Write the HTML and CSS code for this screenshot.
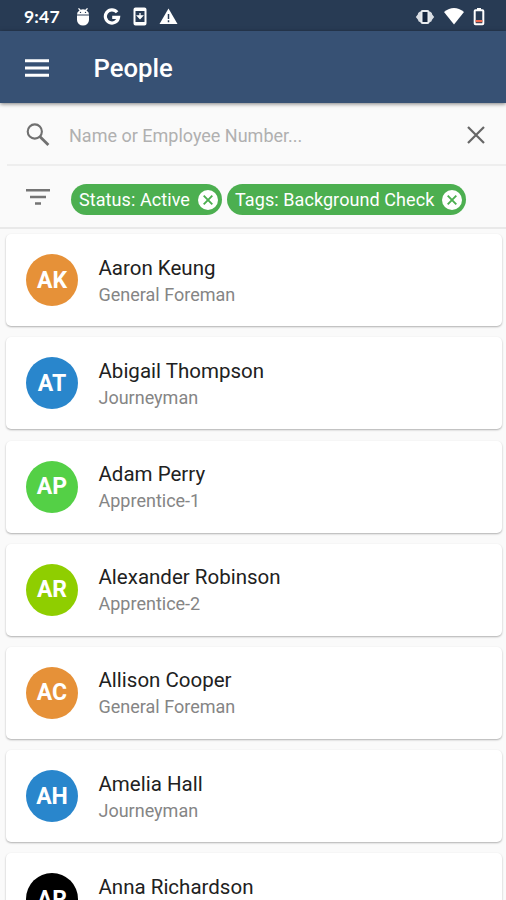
FILE: index.html
```
<!DOCTYPE html>
<html lang="en">
<head>
<meta charset="utf-8">
<title>People</title>
<link rel="stylesheet" href="styles.css">
</head>
<body>
<div class="screen">
  <div class="status-bar">
    <span class="clock">9:47</span>
    <div class="notifications">
      <svg width="16" height="20" viewBox="0 0 16 20"><path fill="#fff" d="M2 8.600h12v4.400a6 5.500 0 0 1-12 0zM2 7.600a6 5 0 0 1 2.500-4.200L3 1.800l1-.8 1.700 1.800a6.500 6.500 0 0 1 4.600 0L12 1l1 .8-1.500 1.600a6 5 0 0 1 2.500 4.200z"/><circle cx="5.500" cy="5.400" r=".7" fill="#283b54"/><circle cx="10.500" cy="5.400" r=".7" fill="#283b54"/></svg>
      <svg width="18" height="18" viewBox="0 0 18 18"><path fill="none" stroke="#fff" stroke-width="3.200" d="M14.100 4.300A6.600 6.600 0 1 0 15.500 9.400H9.200"/></svg>
      <svg width="14" height="19" viewBox="0 0 14 19"><rect x="1.500" y="1.500" width="11" height="16" rx="1" fill="#283b54" stroke="#fff" stroke-width="2"/><path d="M2 2.500h10M2 16.500h10" stroke="#fff" stroke-width="3"/><path d="M7 6v5M4.500 8.800h5L7 11.600z" fill="#fff" stroke="#fff" stroke-width="1.300"/></svg>
      <svg width="19" height="17" viewBox="0 0 19 17"><path fill="#fff" d="M9.500.5L18.500 16H.5z"/><path d="M9.500 6v5M9.500 12.300v1.900" stroke="#283b54" stroke-width="1.500"/></svg>
    </div>
    <div class="system">
      <svg width="20" height="16" viewBox="0 0 20 16"><path fill="#d9dde3" d="M6 2.500v11Q3 13 2.800 10.600L.8 8l2-2.600Q3 3 6 2.500zM14 2.500v11q3-.5 3.200-2.900l2-2.600-2-2.600Q17 3 14 2.500z"/><rect x="6.500" y="2" width="7" height="12" rx="1" fill="#15263f" stroke="#e8ebef" stroke-width="2"/></svg>
      <svg width="20" height="17" viewBox="0 0 20 17"><path fill="#fff" d="M0 4Q10-4 20 4L10 16.500z"/></svg>
      <svg width="12" height="19" viewBox="0 0 12 19"><path fill="#fff" d="M4 1h4v2H4z"/><rect x="1.700" y="3.200" width="8.600" height="14" rx=".8" fill="#283b54" stroke="#fff" stroke-width="2"/><path fill="#ef6a50" d="M2.600 13h6.800v2.200H2.600z"/></svg>
    </div>
  </div>
  <header class="app-bar">
    <svg width="24" height="18" viewBox="0 0 24 18"><path d="M0 1.700h24M0 9h24M0 16.300h24" stroke="#fff" stroke-width="3"/></svg>
    <h1>People</h1>
  </header>
  <div class="search">
    <svg width="24" height="24" viewBox="0 0 24 24"><circle cx="8.800" cy="8.500" r="7.100" fill="none" stroke="#707070" stroke-width="2.100"/><path d="M13.800 13.500l8.600 8.600" stroke="#707070" stroke-width="2.800"/></svg>
    <span class="placeholder">Name or Employee Number...</span>
    <svg width="18" height="18" viewBox="0 0 18 18"><path d="M1 1l16 16M17 1L1 17" stroke="#666" stroke-width="2.200"/></svg>
  </div>
  <div class="filters">
    <svg width="24" height="16" viewBox="0 0 24 16"><path d="M0 1.300h24M4 8h16M9 14.500h6" stroke="#747474" stroke-width="2.400"/></svg>
    <span class="chip chip-status"><span class="chip-text">Status: Active</span><svg width="20" height="20" viewBox="0 0 20 20"><circle cx="10" cy="10" r="10" fill="#fff"/><path d="M5.700 5.700l8.600 8.600M14.300 5.700l-8.600 8.600" stroke="#4caf50" stroke-width="1.900"/></svg></span>
    <span class="chip chip-tags"><span class="chip-text">Tags: Background Check</span><svg width="20" height="20" viewBox="0 0 20 20"><circle cx="10" cy="10" r="10" fill="#fff"/><path d="M5.700 5.700l8.600 8.600M14.300 5.700l-8.600 8.600" stroke="#4caf50" stroke-width="1.900"/></svg></span>
  </div>
  <main class="people">
    <article class="card"><div class="avatar orange">AK</div><div class="info"><div class="name">Aaron Keung</div><div class="role">General Foreman</div></div></article>
    <article class="card"><div class="avatar blue">AT</div><div class="info"><div class="name">Abigail Thompson</div><div class="role">Journeyman</div></div></article>
    <article class="card"><div class="avatar green">AP</div><div class="info"><div class="name">Adam Perry</div><div class="role">Apprentice-1</div></div></article>
    <article class="card"><div class="avatar lime">AR</div><div class="info"><div class="name">Alexander Robinson</div><div class="role">Apprentice-2</div></div></article>
    <article class="card"><div class="avatar orange">AC</div><div class="info"><div class="name">Allison Cooper</div><div class="role">General Foreman</div></div></article>
    <article class="card"><div class="avatar blue">AH</div><div class="info"><div class="name">Amelia Hall</div><div class="role">Journeyman</div></div></article>
    <article class="card"><div class="avatar black">AR</div><div class="info"><div class="name">Anna Richardson</div></div></article>
  </main>
</div>
</body>
</html>
```
FILE: styles.css
```
* { box-sizing: border-box; }
body { margin: 0; font-family: Roboto, sans-serif; background: #fafafa; }
svg { display: block; flex: none; }
.screen { width: 506px; height: 900px; overflow: hidden; display: flex; flex-direction: column; }
.status-bar { height: 31px; flex: none; display: flex; align-items: center; padding: 2px 21px 0 24px; background: #283b54; }
.clock { width: 51px; color: #fff; font: 700 17.500px/20px Lato, sans-serif; letter-spacing: 0.200px; }
.notifications { display: flex; align-items: center; gap: 12px; }
.system { display: flex; align-items: center; gap: 9px; margin-left: auto; }
.app-bar { height: 72px; flex: none; display: flex; align-items: center; gap: 44.500px; padding: 2px 24px 0 25px; background: #375174; box-shadow: 0 1px 4px rgba(0,0,0,.5); z-index: 1; }
h1 { margin: 0; color: #fff; font-size: 25.700px; font-weight: 500; line-height: 32px; }
.search { height: 63px; flex: none; display: flex; align-items: center; margin-left: 7px; padding: 3px 21px 0 19px; border-bottom: 2px solid #eee; }
.placeholder { flex: 1; margin-left: 19px; padding-top: 1px; color: #b0b0b0; font-size: 18px; line-height: 24px; }
.filters { height: 63px; flex: none; display: flex; align-items: center; padding: 6px 0 0 26px; border-bottom: 2px solid #e9e9e9; }
.filters > svg { margin: 0 21px 6px 0; }
.chip { height: 31px; flex: none; display: flex; align-items: center; justify-content: space-between; padding: 0 4px 0 8px; border-radius: 16px; background: #4caf50; color: #fff; font-size: 18px; }
.chip-status { width: 151px; margin-right: 5px; }
.chip-tags { width: 239px; }
.chip-text { white-space: nowrap; letter-spacing: 0.080px; }
.people { display: flex; flex-direction: column; gap: 11.200px; padding: 5.200px 4px 0 6px; }
.card { height: 92px; flex: none; display: flex; align-items: center; gap: 20.500px; padding-left: 20px; border-radius: 5px; background: #fff; box-shadow: 0 1px 2px rgba(0,0,0,.3); }
.avatar { width: 52px; height: 52px; border-radius: 50%; display: flex; align-items: center; justify-content: center; color: #fff; font-size: 23px; font-weight: 700; }
.orange { background: #e69138; }
.blue { background: #2986cc; }
.green { background: #54d046; }
.lime { background: #8fce00; }
.black { background: #000; }
.info { height: 55px; padding-top: 2px; }
.name { color: #212121; font-size: 20.500px; line-height: 27px; }
.role { color: #858585; font-size: 18px; line-height: 26px; }
```
